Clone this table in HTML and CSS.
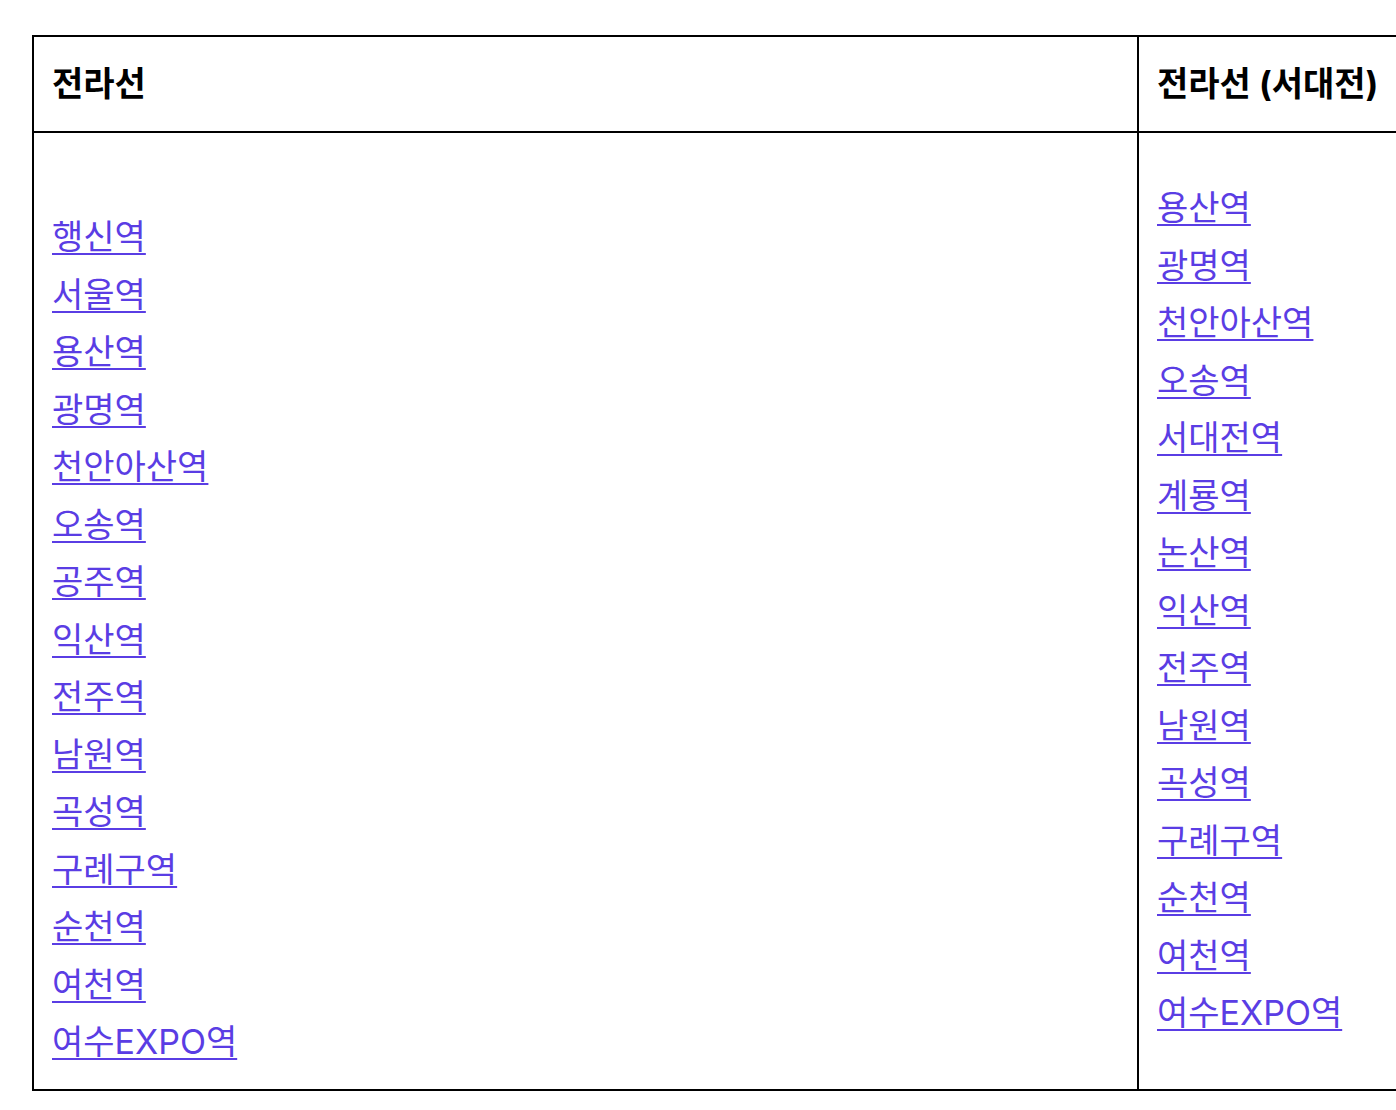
FILE: index.html
```html
<!DOCTYPE html>
<html lang="ko">
<head>
<meta charset="utf-8">
<title>전라선</title>
<link rel="stylesheet" href="styles.css">
</head>
<body>
<div class="wrap">
<table class="lines">
  <thead>
    <tr>
      <th class="col-main">전라선</th>
      <th class="col-side">전라선 (서대전)</th>
    </tr>
  </thead>
  <tbody>
    <tr>
      <td class="col-main">
        <span class="blank"></span>
        <a href="#">행신역</a>
        <a href="#">서울역</a>
        <a href="#">용산역</a>
        <a href="#">광명역</a>
        <a href="#">천안아산역</a>
        <a href="#">오송역</a>
        <a href="#">공주역</a>
        <a href="#">익산역</a>
        <a href="#">전주역</a>
        <a href="#">남원역</a>
        <a href="#">곡성역</a>
        <a href="#">구례구역</a>
        <a href="#">순천역</a>
        <a href="#">여천역</a>
        <a href="#">여수EXPO역</a>
      </td>
      <td class="col-side">
        <a href="#">용산역</a>
        <a href="#">광명역</a>
        <a href="#">천안아산역</a>
        <a href="#">오송역</a>
        <a href="#">서대전역</a>
        <a href="#">계룡역</a>
        <a href="#">논산역</a>
        <a href="#">익산역</a>
        <a href="#">전주역</a>
        <a href="#">남원역</a>
        <a href="#">곡성역</a>
        <a href="#">구례구역</a>
        <a href="#">순천역</a>
        <a href="#">여천역</a>
        <a href="#">여수EXPO역</a>
      </td>
    </tr>
  </tbody>
</table>
</div>
</body>
</html>
```
FILE: styles.css
```css
html, body {
  margin: 0;
  padding: 0;
  background: #ffffff;
  overflow: hidden;
}
body {
  font-family: Inter, "Noto Sans CJK KR", sans-serif;
  font-size: 34px;
  color: #000000;
}
.wrap {
  padding: 35px 0 0 32px;
}
.lines {
  border-collapse: collapse;
  border: 2px solid #000;
  width: 1400px;
  table-layout: fixed;
}
.lines th, .lines td {
  border: 2px solid #000;
  padding: 18px 18px;
  line-height: 57.5px;
  text-align: left;
  vertical-align: middle;
}
.lines th {
  font-weight: 700;
  white-space: nowrap;
}
.col-main {
  width: 1067px;
}
.lines a {
  display: block;
  width: max-content;
  color: #5a3de4;
  text-decoration: underline;
  text-decoration-thickness: 2px;
  text-underline-offset: 4px;
  white-space: nowrap;
}
.blank {
  display: block;
  height: 57.5px;
}
```
